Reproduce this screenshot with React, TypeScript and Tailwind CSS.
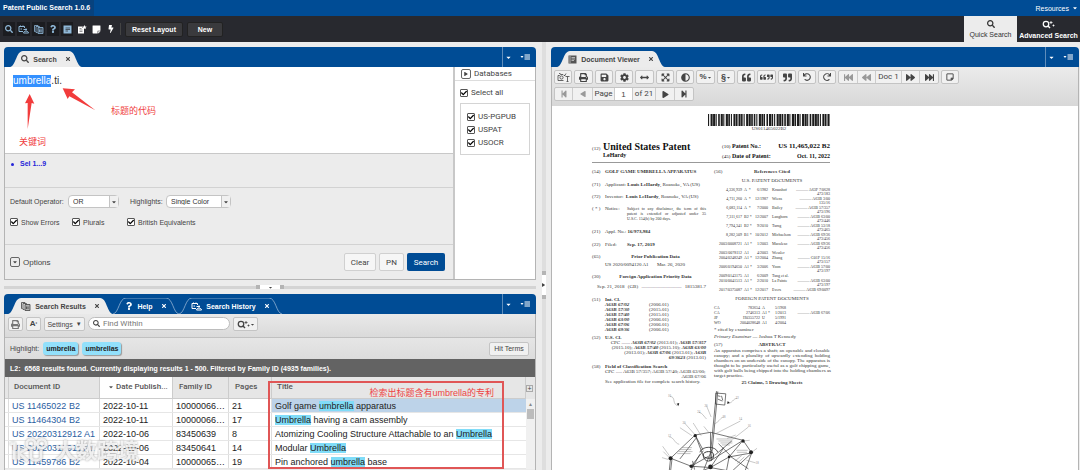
import { useState } from "react";
import type { ReactNode } from "react";
import {
  FaSearch, FaQuestion, FaBolt, FaStickyNote, FaRegStickyNote, FaCheck, FaPrint, FaSave, FaCog, FaArrowsAltH,
  FaAdjust, FaQuoteLeft, FaQuoteRight, FaUndo, FaRedo, FaFastBackward, FaBackward, FaForward, FaFastForward,
  FaStepBackward, FaStepForward, FaPlay, FaCaretDown, FaTimes, FaExpandArrowsAlt,
} from "react-icons/fa";

const HistoryIcon = () => (
  <svg viewBox="0 0 22 18" className="w-[11px] h-[9px]" fill="none" stroke="currentColor" strokeWidth="2">
    <path d="M10 13H2V3h11v3M5 1v3M10 1v3M5 8h3M11 9h3" />
    <circle cx="16" cy="9" r="2.2" fill="currentColor" stroke="none" />
    <path d="M11 16c0-5 10-5 10 0z" />
  </svg>
);

const StackIcon = () => (
  <svg viewBox="0 0 20 18" className="w-[10px] h-[9px]" fill="none" stroke="currentColor" strokeWidth="1.6">
    <path d="M3 13H1V1h7v2M7 15H4V3h7v2" />
    <path d="M8 5h10v12H8z" fill="currentColor" fillOpacity=".35" />
    <path d="M11 9v5M14 9v5" />
  </svg>
);

const DocIcon = () => (
  <svg viewBox="0 0 18 18" className="w-[9px] h-[9px]">
    <path d="M1 1h16v16H1z" fill="currentColor" />
    <path d="M5 6h9M5 9h9M5 12h5" stroke="#28292f" strokeWidth="1.4" />
  </svg>
);

const ViewerIcon = () => (
  <svg viewBox="0 0 18 18" className="w-[9px] h-[9px]">
    <path d="M1 1h16v16H1z" fill="#555" />
    <path d="M4 2v14M7 5h7M7 8h7M7 11h5" stroke="#ddd" strokeWidth="1.4" />
  </svg>
);

const EditNoteIcon = () => (
  <svg viewBox="0 0 20 18" className="w-[10px] h-[9px]" fill="currentColor">
    <path d="M2 3h9v3h3v11H2z" />
    <path d="M15 0l1.500 3 3 .5-2.500 2 .5 3-2.500-1.500-3 1.500.5-3-2-2 3-.5z" />
    <path d="M5 7h4M5 10h6M5 13h6" stroke="#28292f" strokeWidth="1" />
  </svg>
);

const SearchPlus = () => (
  <svg viewBox="0 0 26 18" className="w-[13px] h-[9px]" fill="none" stroke="currentColor">
    <circle cx="8" cy="8" r="5.500" strokeWidth="2.500" />
    <path d="M12 12l4 4" strokeWidth="3" />
    <path d="M18 2v6M15 5h6M23 9v4M21 11h4" strokeWidth="1.600" />
  </svg>
);

const CameraText = () => (
  <svg viewBox="0 0 26 18" className="w-[13px] h-[9px]" fill="none" stroke="currentColor" strokeWidth="1.600">
    <path d="M13 15H2V5h3l2-2h5l2 2h2M4 1h3" />
    <circle cx="9" cy="9" r="3.200" />
    <path d="M17 7h8M21 7v10M19 17h4M18 1l-3 5" />
  </svg>
);

const MenuIcon = () => (
  <svg viewBox="0 0 20 12" className="w-[10px] h-[6px]" fill="none" stroke="currentColor" strokeWidth="2">
    <path d="M9 2h11M9 6h11M9 10h11" />
    <path d="M1 4h6L4 8z" fill="currentColor" stroke="none" />
  </svg>
);

const Tab = ({ w, width, active, icon, label }: { w: number; width: string; active?: boolean; icon: ReactNode; label: string }) => (
  <div className={`relative h-4 ${width} ${active ? "text-[#444]" : "text-white"}`}>
    <svg className="absolute inset-0 w-full h-full" viewBox={`0 0 ${w} 16`} preserveAspectRatio="none">
      <path
        d={`M0 16C6 15 6 0 13 0H${w - 13}C${w - 6} 0 ${w - 6} 15 ${w} 16`}
        fill={active ? "#ececec" : "none"}
        stroke={active ? "none" : "#a9c2dc"}
        strokeWidth=".7"
      />
    </svg>
    <button className="relative w-full h-full flex items-center justify-center gap-1 font-bold leading-none">
      {icon}
      <span className="whitespace-nowrap">{label}</span>
      <FaTimes className="w-[6px] h-[6px] ml-1" />
    </button>
  </div>
);

const TabBar = ({ children }: { children: ReactNode }) => (
  <div className="h-5 shrink-0 bg-[#004c95] rounded-t flex items-end">
    {children}
    <div className="ml-auto self-stretch w-[34px] border-l border-[#5f8dbb] flex items-center justify-between pl-0.5 pr-1.5 text-white">
      <FaCaretDown className="w-[7px] h-[7px]" />
      <MenuIcon />
    </div>
  </div>
);

const Check = ({ label, className = "" }: { label: string; className?: string }) => {
  const [on, setOn] = useState(true);
  return (
    <label className={`flex items-center gap-[3px] leading-none whitespace-nowrap ${className}`}>
      <span className="relative w-2 h-2 shrink-0">
        <input
          type="checkbox"
          checked={on}
          onChange={() => setOn(!on)}
          className="block appearance-none w-2 h-2 border border-[#555] rounded-[1px] bg-white"
        />
        {on && <FaCheck className="absolute left-[1px] top-[1px] w-[6px] h-[6px] text-black pointer-events-none" />}
      </span>
      {label}
    </label>
  );
};

const Pick = ({ id, value, width }: { id: string; value: string; width: string }) => (
  <div className={`relative h-[13px] ${width}`}>
    <select id={id} className="appearance-none w-full h-full bg-white border border-[#c4c4c4] rounded-sm pl-1 text-[#333] leading-none">
      <option>{value}</option>
    </select>
    <span className="absolute right-px top-px bottom-px w-[9px] border-l border-[#c4c4c4] bg-[#f0f0f0] flex items-center justify-center pointer-events-none">
      <FaCaretDown className="w-[6px] h-[6px]" />
    </span>
  </div>
);

const SearchPanel = () => (
  <section className="flex flex-col shrink-0">
    <TabBar>
      <div className="pl-1.5">
        <Tab w={72} width="w-[72px]" active icon={<FaSearch className="w-2 h-2" />} label="Search" />
      </div>
    </TabBar>
    <div className="flex border border-t-0 border-[#b4b4b4]">
      <div className="flex-1 min-w-0">
        <div className="relative h-[87px] bg-white border-b border-[#c8c8c8] px-2 pt-2">
          <div className="text-[10px] leading-3 text-[#333]" role="textbox" aria-label="Query">
            <span className="inline-block bg-[#3390ff] text-white">umbrella</span>.ti.
          </div>
          <svg className="absolute left-0 top-0 w-[100px] h-[70px]" viewBox="0 0 300 210" fill="#f23c3c">
            <path d="M74 81L88 110 80 108 68 186 68 108 60 109z" />
            <path d="M173 64L210 67 201 76 271 130 193 88 188 96z" />
          </svg>
          <span className="absolute left-[106px] top-[38px] text-[9px] leading-3 text-[#f04040]">标题的代码</span>
          <span className="absolute left-[14px] top-[69px] text-[9px] leading-3 text-[#f04040]">关键词</span>
        </div>
        <div className="h-[34px] border-b border-[#d2d2d2] px-1.5 pt-1.5">
          <button className="flex items-center gap-[6px] font-bold leading-2 text-[#2424d8]">
            <span className="w-[3px] h-[3px] rounded-full bg-[#2424d8]" />
            Sel 1...9
          </button>
        </div>
        <div className="h-[57px] border-b border-[#d2d2d2] px-[5px] pt-[7px]">
          <div className="flex items-center">
            <label htmlFor="op" className="w-[58px]">Default Operator:</label>
            <Pick id="op" value="OR" width="w-[51px]" />
            <label htmlFor="hl" className="w-[36px] ml-[11px]">Highlights:</label>
            <Pick id="hl" value="Single Color" width="w-[65px]" />
          </div>
          <div className="flex pt-[10px]">
            <Check label="Show Errors" className="w-[62px]" />
            <Check label="Plurals" className="w-[55px]" />
            <Check label="British Equivalents" />
          </div>
        </div>
        <div className="h-[34px] flex items-center pl-[5px] pr-2 gap-[3px]">
          <button className="flex items-center gap-[3px] mr-auto text-[8px]">
            <span className="w-[10px] h-[10px] border border-[#666] rounded-[2px] flex items-center justify-center">
              <FaCaretDown className="w-[6px] h-[6px]" />
            </span>
            Options
          </button>
          <button className="h-[18px] w-8 bg-[#f6f6f6] border border-[#d0d0d0] rounded-[2px] text-[8px] font-['Roboto',sans-serif]">Clear</button>
          <button className="h-[18px] w-[25px] bg-[#f6f6f6] border border-[#d0d0d0] rounded-[2px] text-[8px] font-['Roboto',sans-serif]">PN</button>
          <button className="h-[18px] w-[38px] bg-[#004c95] text-white rounded-[2px] text-[8px] font-['Roboto',sans-serif]">Search</button>
        </div>
      </div>
      <div className="w-[82px] shrink-0 bg-white border-l-2 border-[#c8c8c8] text-[8px] font-['Roboto',sans-serif]">
        <div className="h-[14px] border-b border-[#ddd] flex items-center gap-[3px] pl-1.5">
          <span className="w-[10px] h-[10px] border border-[#666] rounded-[2px] flex items-center justify-center">
            <FaPlay className="w-[4px] h-[4px]" />
          </span>
          Databases
        </div>
        <div className="px-[5px] pt-2">
          <Check label="Select all" />
          <div className="mt-[6px] h-[52px] border border-[#d4d4d4] px-[6px] pt-[9px] flex flex-col gap-[5px]">
            <Check label="US-PGPUB" />
            <Check label="USPAT" />
            <Check label="USOCR" />
          </div>
        </div>
      </div>
    </div>
  </section>
);

const results = [
  ["US 11465022 B2", "2022-10-11", "10000066…", "21", "Golf game |umbrella| apparatus"],
  ["US 11464304 B2", "2022-10-11", "10000066…", "17", "|Umbrella| having a cam assembly"],
  ["US 20220312912 A1", "2022-10-06", "83450639", "8", "Atomizing Cooling Structure Attachable to an |Umbrella|"],
  ["US 20220312911 A1", "2022-10-06", "83450641", "14", "Modular |Umbrella|"],
  ["US 11459786 B2", "2022-10-04", "10000065…", "19", "Pin anchored |umbrella| base"],
];

const greyBtn = "h-[14px] bg-[#f1f1f1] border border-[#c4c4c4] rounded-[2px] flex items-center justify-center leading-none";
const chip = "h-[13px] px-[3px] rounded-[3px] bg-[#92e0fb] shadow-[1px_1px_1px_#999] font-bold flex items-center text-[#222]";
const th = "shrink-0 border-r border-[#ccc] leading-[20px] font-medium font-['Roboto',sans-serif]";

const ResultsPanel = () => (
  <section className="relative flex flex-col flex-1 min-h-0">
    <TabBar>
      <div className="pl-1 flex">
        <Tab w={105} width="w-[105px]" active icon={<StackIcon />} label="Search Results" />
        <Tab w={66} width="w-[66px]" icon={<FaQuestion className="w-2 h-2" />} label="Help" />
        <Tab w={103} width="w-[103px]" icon={<HistoryIcon />} label="Search History" />
      </div>
    </TabBar>
    <div className="flex-1 min-h-0 border-x border-[#b4b4b4]">
      <div className="h-6 bg-gradient-to-b from-[#e9e9e9] to-[#dadada] border-b border-[#c0c0c0] flex items-start pt-[3px] px-[3px] gap-[3px]">
        <button aria-label="Print" className={`${greyBtn} w-[15px] text-[#777]`}><FaPrint className="w-[9px] h-[9px]" /></button>
        <button aria-label="Font size" className={`${greyBtn} w-[15px] font-bold text-[8px]`}>A<span className="text-[5px]">²</span></button>
        <button className={`${greyBtn} w-[41px] gap-[3px]`}>Settings <span className="text-[6px]">▼</span></button>
        <label className="relative block w-[142px]">
          <FaSearch className="absolute left-[5px] top-[3px] w-[7px] h-[7px]" />
          <input
            placeholder="Find Within"
            aria-label="Find Within"
            className="block w-full h-[13px] rounded-full border border-[#bdbdbd] bg-white pl-[14px] leading-none text-[8px] font-['Roboto',sans-serif] placeholder:text-[#777]"
          />
        </label>
        <button aria-label="Search options" className={`${greyBtn} w-[25px]`}><SearchPlus /><FaCaretDown className="w-[5px] h-[5px]" /></button>
      </div>
      <div className="h-[21px] bg-gradient-to-b from-[#e6e6e6] to-[#dcdcdc] flex items-center pl-[5px] pr-1.5 gap-1">
        <span>Highlight:</span>
        <span className={chip}>umbrella</span>
        <span className={chip}>umbrellas</span>
        <button className={`${greyBtn} w-10 ml-auto`}>Hit Terms</button>
      </div>
      <div className="h-[18px] bg-[#636363] text-white font-bold flex items-center pl-[5px] whitespace-pre">
        {"L2:  6568 results found. Currently displaying results 1 - 500. Filtered by Family ID (4935 families)."}
      </div>
      <div className="flex">
        <table className="flex-1 block overflow-hidden">
          <thead className="block">
            <tr className="flex h-[22px] items-stretch bg-[#e6e6e6] border-b border-[#ccc] text-left text-[8px] text-[#555]">
              <th aria-label="Mark" className="w-1 shrink-0 border-r border-[#ccc]" />
              <th className={`${th} w-[91px] pl-[5px]`}>Document ID</th>
              <th className={`${th} w-[73px] bg-white pl-2 whitespace-nowrap`}>
                <FaCaretDown className="inline w-[6px] h-[6px] mr-0.5" />Date Publish...
              </th>
              <th className={`${th} w-14 pl-1.5`}>Family ID</th>
              <th className={`${th} w-[43px] pl-1.5`}>Pages</th>
              <th className={`${th} flex-1 pl-[5px]`}>Title</th>
            </tr>
          </thead>
          <tbody className="block bg-white text-[9px] text-[#222]">
            {results.map((r, i) => (
              <tr key={r[0]} className="flex h-[14px] leading-[14px] border-b border-[#e6e6e6] whitespace-nowrap">
                <td className="w-1 shrink-0 border-r border-[#ddd]" />
                <td className="w-[91px] shrink-0 border-r border-[#ddd] pl-[3px]"><a href="#" className="text-[#2a5d9f]">{r[0]}</a></td>
                <td className="w-[73px] shrink-0 border-r border-[#ddd] pl-[3px]">{r[1]}</td>
                <td className="w-14 shrink-0 border-r border-[#ddd] pl-[3px]">{r[2]}</td>
                <td className="w-[43px] shrink-0 border-r border-[#ddd] pl-[3px]">{r[3]}</td>
                <td className={`flex-1 pl-[3px] ${i === 0 ? "bg-[#bdd3e9]" : ""}`}>
                  {r[4].split("|").map((part, k) => (k % 2 ? <mark key={k} className="bg-[#80dcf8] text-inherit">{part}</mark> : part))}
                </td>
              </tr>
            ))}
          </tbody>
        </table>
        <div className="w-[9px] shrink-0 bg-[#f0f0f0]">
          <div className="h-[22px] bg-[#e6e6e6] flex items-center">
            <span className="w-[7px] h-[7px] border border-[#aaa] text-[7px] leading-[5px] text-center">+</span>
          </div>
          <div className="h-[10px] text-[5px] leading-[10px] text-center text-[#888]">▲</div>
          <div className="w-[7px] h-[10px] mx-auto bg-[#bcbcbc]" />
        </div>
      </div>
    </div>
    <div className="absolute left-[264px] right-[32px] top-[87px] bottom-px border-2 border-[#e05656] pointer-events-none">
      <span className="absolute right-2 top-1 text-[9px] leading-3 text-[#ee4444]">检索出标题含有umbrella的专利</span>
    </div>
  </section>
);

const Group = ({ children }: { children: ReactNode }) => (
  <div className="flex h-[14px] bg-[#f1f1f1] border border-[#c4c4c4] rounded-[2px] divide-x divide-[#ccc]">{children}</div>
);
const cell = "flex items-center justify-center leading-none";
const ic = "w-[9px] h-[9px]";

const tools: { name: string; icon: ReactNode; wide?: boolean; down?: boolean }[] = [
  { name: "Image or text", icon: <CameraText /> },
  { name: "Print", icon: <FaPrint className={ic} />, wide: true },
  { name: "Save", icon: <FaSave className={ic} /> },
  { name: "Settings", icon: <FaCog className={ic} /> },
  { name: "Fit width", icon: <FaArrowsAltH className={ic} />, wide: true },
  { name: "Fit page", icon: <FaExpandArrowsAlt className={ic} />, down: true },
  { name: "Contrast", icon: <FaAdjust className={ic} /> },
  { name: "Zoom", icon: <><b className="text-[8px]">%</b><FaCaretDown className="w-[5px] h-[5px]" /></>, wide: true },
  { name: "Section", icon: <><b className="text-[9px]">§</b><FaCaretDown className="w-[5px] h-[5px]" /></> },
  { name: "Previous hit", icon: <FaQuoteLeft className={ic} /> },
  { name: "Hits", icon: <><FaQuoteLeft className="w-[6px] h-[6px] mr-px" /><FaQuoteRight className="w-[6px] h-[6px]" /></>, wide: true },
  { name: "Next hit", icon: <FaQuoteRight className={ic} /> },
  { name: "Rotate left", icon: <FaUndo className="w-2 h-2" /> },
  { name: "Rotate right", icon: <FaRedo className="w-2 h-2" /> },
];

const Entry = ({ n, className = "", children }: { n: string; className?: string; children: ReactNode }) => (
  <div className={`flex ${className}`}>
    <span className="w-[13px] shrink-0">{n}</span>
    <div className="flex-1 min-w-0">{children}</div>
  </div>
);

const refs = [
  ["4,336,939", "A  *", "6/1982", "Kraushof", "A63F 7/0628", "473/183"],
  ["4,711,260", "A  *", "12/1987", "Wiens", "A63B 3/00", "135/16"],
  ["6,083,114", "A  *", "7/2000", "Bailey", "A63B 57/357", "473/196"],
  ["7,311,617", "B2 *", "12/2007", "Langhorn", "A63B 63/00", "473/446"],
  ["7,794,341", "B2 *", "9/2010", "Tarng", "A63B 53/18", "473/465"],
  ["8,282,509", "B1 *", "10/2012", "Michaelson", "A63B 69/36", "473/456"],
  ["2003/0008721", "A1 *", "1/2003", "Macaleso", "A63B 69/36", "473/456"],
  ["2003/0078112", "A1", "4/2003", "Wessler", "", ""],
  ["2004/0248249", "A1 *", "12/2004", "Zhang", "G01F 15/16", "473/157"],
  ["2006/0194650", "A1 *", "3/2006", "Yoon", "A63B 57/00", "473/197"],
  ["2009/0143175", "A1", "6/2009", "Tang et al.", "", ""],
  ["2010/0041513", "A1 *", "2/2010", "La Painte", "A63B 63/00", "473/197"],
  ["2017/0375087", "A1 *", "12/2017", "Evers", "A63B 69/0097", ""],
];

const classes = [["A63B 67/02", "2006.01"], ["A63B 57/30", "2015.01"], ["A63B 57/40", "2015.01"], ["A63B 63/00", "2006.01"], ["A63B 67/06", "2006.01"], ["A63B 69/36", "2006.01"]];

const foreign = [["CA", "783654", "A", "5/1968", ""], ["CA", "2746313", "A1 *", "1/2013", "A63B 67/06"], ["JP", "H0355722", "U", "5/1991", ""], ["WO", "2004028648", "A1", "4/2004", ""]];

const bars = [1, 3, 3, 1, 2, 3, 1, 3, 2, 1, 3, 2, 3, 2, 1, 3, 3, 2, 2, 1, 3, 3, 1, 2, 3, 2, 1, 3, 3, 2, 2, 3, 1, 3, 2, 3, 1, 3, 3, 1, 2, 3, 3, 2, 1, 3, 2, 3];

const Barcode = () => (
  <svg viewBox="0 0 144 12" preserveAspectRatio="none" className="w-[122px] h-3 ml-auto">
    {bars.map((b, i) => <rect key={i} x={i * 3} y="0" width={0.7 + b * 0.6} height="12" fill="#1c1c1c" />)}
  </svg>
);

const Umbrella = () => (
  <svg viewBox="0 0 340 246" className="w-[113px] h-[82px] ml-[58px]" fill="none" stroke="#333" strokeWidth="2">
    <path d="M200 6L180 216M204 7L184 216M198 12l30 2-3 34-28-3zM204 20l8 2M204 30l14 6M215 20l4 14" />
    <path d="M62 208L136 138 182 130 280 154 306 192 286 246M62 208L58 246M62 208L124 232 182 236 238 204 306 192M136 138L160 184M182 130V184M280 154L238 204M136 138l24 62M280 154l-96 60M124 232L176 202M124 232l36-46M182 236l54 10" />
    <path d="M66 212l-4 34M128 216l6 26M238 204l-8 42M244 204l52 36M182 236l-26 10M182 236l40-60M206 164l40 40M140 146l-50 64M186 182l-24 60M302 196l-52 48M150 196l-28 50M196 198l50-42" />
    <ellipse cx="176" cy="198" rx="16" ry="10" strokeWidth="3" />
    <path d="M160 200c2 22 30 22 32 0M150 190c6-20 48-20 54 0" strokeWidth="2.500" />
    <path d="M96 176h30M90 182h34M86 188h42M82 194h40M200 150h50M206 156h42M212 162h36M216 168h24M260 184h34M262 190h30M256 216l20-16M262 224l22-20" strokeWidth="1.200" stroke="#666" />
    <path d="M60 22c20 0 4 26 26 28M262 28c-14 0-12 16-30 14M170 50l14 34M148 70c10 2 14 12 22 20M222 84c-10 0-10 12-30 22M104 102l32 36M90 116l36 24M130 102l24 38M162 112l16 20M272 96l-74 38M296 114l-46 36M58 144c14 0 16 20 30 22M38 172l20 28M40 188l20 20M36 206l20 6M300 154l-20 2M322 178l-18 14M318 222l-28-8M258 138l-26 10" strokeWidth="1.200" stroke="#777" />
    <g fill="#222" stroke="none">
      <circle cx="136" cy="140" r="5" /><circle cx="280" cy="156" r="5" /><circle cx="304" cy="190" r="6" /><circle cx="62" cy="208" r="6" />
      <circle cx="182" cy="234" r="7" /><circle cx="124" cy="232" r="5" /><circle cx="238" cy="204" r="4" /><path d="M86 50l-6-6 8-2zM232 44l2-8 6 6z" />
    </g>
    <g fill="#888" stroke="none" fontSize="9">
      <text x="54" y="24">10</text><text x="258" y="30">22</text><text x="164" y="54">20</text><text x="142" y="72">24</text><text x="218" y="88">28</text>
      <text x="98" y="104">30</text><text x="268" y="94">14</text><text x="294" y="114">16</text><text x="54" y="144">12</text><text x="318" y="224">18</text>
    </g>
  </svg>
);

const PatentPage = () => (
  <article className="ml-10 w-[238px] pt-2 font-['Liberation_Serif',serif] text-[5px] leading-[5px] text-[#333]">
    <Barcode />
    <div className="w-[122px] ml-auto text-center">US011465022B2</div>
    <header className="flex justify-between mt-[10px] pb-px border-b border-[#999]">
      <div className="flex items-baseline">
        <span className="w-[11px]">(12)</span>
        <div className="font-bold text-[#111]">
          <h1 className="text-[10px] leading-[11px] whitespace-nowrap">United States Patent</h1>
          <p className="text-[6px] leading-[7px]">LeHardy</p>
        </div>
      </div>
      <div className="w-[108px] text-[6px] font-bold text-[#111]">
        <div className="flex items-baseline leading-[10px]"><span className="w-[10px] font-normal text-[5px]">(10)</span>Patent No.:<span className="ml-auto text-[7px]">US 11,465,022 B2</span></div>
        <div className="flex items-baseline leading-[8px]"><span className="w-[10px] font-normal text-[5px]">(45)</span>Date of Patent:<span className="ml-auto">Oct. 11, 2022</span></div>
      </div>
    </header>
    <div className="flex justify-between mt-[6px]">
      <div className="w-[114px] whitespace-nowrap">
        <Entry n="(54)"><b>GOLF GAME UMBRELLA APPARATUS</b></Entry>
        <Entry n="(71)" className="mt-2">Applicant: <b>Louis LeHardy</b>, Roanoke, VA (US)</Entry>
        <Entry n="(72)" className="mt-[7px]">Inventor: &nbsp;<b>Louis LeHardy</b>, Roanoke, VA (US)</Entry>
        <Entry n="( * )" className="mt-[7px]">
          <div className="flex">
            <span className="w-[22px]">Notice:</span>
            <div className="w-[79px] text-[4px]">
              <p className="[text-align-last:justify]">Subject to any disclaimer, the term of this</p>
              <p className="[text-align-last:justify]">patent is extended or adjusted under 35</p>
              <p>U.S.C. 154(b) by 200 days.</p>
            </div>
          </div>
        </Entry>
        <Entry n="(21)" className="mt-2">Appl. No.: <b>16/973,984</b></Entry>
        <Entry n="(22)" className="mt-2"><span className="inline-block w-[22px]">Filed:</span><b>Sep. 17, 2019</b></Entry>
        <Entry n="(65)" className="mt-[7px]"><b className="block text-center">Prior Publication Data</b></Entry>
        <p className="mt-[3px] pl-[13px]">US 2020/0094120 A1 <span className="ml-[7px]">Mar. 26, 2020</span></p>
        <Entry n="(30)" className="mt-[7px]"><b className="block text-center">Foreign Application Priority Data</b></Entry>
        <p className="mt-[5px] pl-[5px] flex justify-between"><span>Sep. 21, 2018</span><span>(GB)</span><span>................................</span><span>1815381.7</span></p>
        <Entry n="(51)" className="mt-2">
          <b>Int. Cl.</b>
          {classes.map(([c, y]) => <p key={c} className="flex"><b className="w-11 italic">{c}</b>({y})</p>)}
        </Entry>
        <Entry n="(52)" className="mt-[3px]">
          <b>U.S. Cl.</b>
          <div className="text-right">
            <p>CPC ....... <b><i>A63B 67/02</i></b> (2013.01); <b><i>A63B 57/357</i></b></p>
            <p>(2015.10); <b><i>A63B 57/40</i></b> (2015.10); <b><i>A63B 63/00</i></b></p>
            <p>(2013.01); <b><i>A63B 67/06</i></b> (2013.01); <b><i>A63B</i></b></p>
            <p><b><i>69/3623</i></b> (2013.01)</p>
          </div>
        </Entry>
        <Entry n="(58)" className="mt-1">
          <b>Field of Classification Search</b>
          <p>CPC ..... A63B 57/357; A63B 57/40; A63B 63/00;</p>
          <p className="text-right">A63B 67/06</p>
          <p>See application file for complete search history.</p>
        </Entry>
      </div>
      <div className="w-[116px] whitespace-nowrap">
        <Entry n="(56)"><b className="block text-center pr-[13px]">References Cited</b></Entry>
        <p className="text-center mt-1">U.S. PATENT DOCUMENTS</p>
        <div className="mt-1 text-[4px]">
          {refs.map((r) => (
            <div key={r[0]}>
              <p className="flex">
                <span className="w-[28px] text-right">{r[0]}</span>
                <span className="w-[10px] pl-0.5 whitespace-pre">{r[1]}</span>
                <span className="w-4 text-right">{r[2]}</span>
                <span className="pl-1">{r[3]}</span>
                {r[4] && <span className="ml-auto">............ {r[4]}</span>}
              </p>
              {r[5] && <p className="text-right leading-[4px]">{r[5]}</p>}
            </div>
          ))}
        </div>
        <p className="text-center mt-1">FOREIGN PATENT DOCUMENTS</p>
        <div className="mt-1 text-[4px]">
          {foreign.map((r) => (
            <p key={r[1]} className="flex">
              <span className="w-5">{r[0]}</span>
              <span className="w-[26px] text-right">{r[1]}</span>
              <span className="w-[10px] pl-0.5">{r[2]}</span>
              <span className="w-4 text-right">{r[3]}</span>
              {r[4] && <span className="ml-auto">............ {r[4]}</span>}
            </p>
          ))}
        </div>
        <p className="mt-0.5">* cited by examiner</p>
        <p className="mt-0.5"><i>Primary Examiner</i> — Joshua T Kennedy</p>
        <Entry n="(57)" className="mt-[3px]"><b className="block text-center pr-[13px]">ABSTRACT</b></Entry>
        <div className="mt-px [text-align-last:justify]">
          <p>An apparatus comprises a shaft; an openable and closable</p>
          <p>canopy; and a plurality of upwardly extending holding</p>
          <p>chambers on an underside of the canopy. The apparatus is</p>
          <p>thought to be particularly useful as a golf chipping game,</p>
          <p>with golf balls being chipped into the holding chambers as</p>
          <p className="[text-align-last:left]">target practice.</p>
        </div>
        <b className="block text-center mt-0.5">25 Claims, 5 Drawing Sheets</b>
      </div>
    </div>
    <div className="mt-1"><Umbrella /></div>
  </article>
);

const ViewerPanel = () => (
  <section className="flex flex-col min-h-0 min-w-0">
    <TabBar>
      <div className="pl-1.5">
        <Tab w={108} width="w-[108px]" active icon={<ViewerIcon />} label="Document Viewer" />
      </div>
    </TabBar>
    <div className="h-[39px] shrink-0 bg-gradient-to-b from-[#ebebeb] to-[#d8d8d8] border-x border-[#b4b4b4] px-0.5 pt-[3px] flex flex-col gap-[3px]">
      <div className="flex gap-0.5">
        {tools.map((t) => (
          <button key={t.name} aria-label={t.name} className={`${greyBtn} ${t.wide ? "w-[19px]" : "w-[18px]"} ${t.down ? "bg-[#d5d5d5] border-[#aaa]" : ""}`}>
            {t.icon}
          </button>
        ))}
        <Group>
          <button aria-label="First document" className={`${cell} w-[19px] text-[#999]`}><FaFastBackward className={ic} /></button>
          <button aria-label="Previous document" className={`${cell} w-[18px] text-[#999]`}><FaBackward className={ic} /></button>
          <span className={`${cell} w-[26px] text-[8px] font-['Roboto',sans-serif]`}>Doc 1</span>
          <button aria-label="Next document" className={`${cell} w-[18px]`}><FaForward className={ic} /></button>
          <button aria-label="Last document" className={`${cell} w-[18px]`}><FaFastForward className={ic} /></button>
        </Group>
        <button aria-label="Notes" className={`${greyBtn} w-[18px]`}><FaRegStickyNote className="w-2 h-2 rotate-0 text-[#222]" /></button>
      </div>
      <div className="flex">
        <Group>
          <button aria-label="First page" className={`${cell} w-[18px] text-[#999]`}><FaStepBackward className="w-2 h-2" /></button>
          <button aria-label="Previous page" className={`${cell} w-5 text-[#999]`}><FaPlay className="w-[6px] h-[6px] rotate-180" /></button>
          <label htmlFor="page" className={`${cell} w-[22px] text-[8px] font-['Roboto',sans-serif]`}>Page</label>
          <input id="page" defaultValue="1" className="w-[18px] bg-white text-center text-[8px] leading-none" />
          <span className={`${cell} w-[23px] text-[8px] font-['Roboto',sans-serif]`}>of 21</span>
          <button aria-label="Next page" className={`${cell} w-[19px]`}><FaPlay className="w-[7px] h-[7px]" /></button>
          <button aria-label="Last page" className={`${cell} w-[18px]`}><FaStepForward className="w-2 h-2" /></button>
        </Group>
      </div>
    </div>
    <div className="flex-1 min-h-0 overflow-hidden bg-white border-x border-[#b4b4b4]">
      <PatentPage />
    </div>
  </section>
);

const Watermark = () => (
  <div className="absolute left-[9px] bottom-[5px] flex items-center gap-[6px] text-white/80 [filter:drop-shadow(0_0_1px_#888)] pointer-events-none">
    <svg viewBox="0 0 120 84" className="w-10 h-7" fill="none" stroke="currentColor" strokeWidth="8">
      <path d="M4 20h12v48M30 70V26M30 48l24-14M30 48l26 24" />
      <circle cx="66" cy="20" r="13" /><circle cx="98" cy="20" r="13" />
      <path d="M66 38v22c0 14 30 14 30 0V38" />
    </svg>
    <span className="text-[21px] leading-7 font-bold">大数跨境</span>
  </div>
);

const dockBtn = "h-[14px] bg-[#1b1c20] flex items-center justify-center";
const navBtn = "h-[14px] text-white flex items-center justify-center";
const textBtn = "h-[15px] bg-[#3a3a3d] border border-[#222] rounded-[2px] font-bold leading-none";

export default function App() {
  return (
    <div className="relative h-screen flex flex-col overflow-hidden bg-[#ececec] text-[#444] text-[7px] leading-[9px] font-['Liberation_Sans','Noto_Sans_CJK_SC',sans-serif]">
      <header className="h-4 shrink-0 bg-[#004c95] text-white flex items-center justify-between">
        <h1 className="font-bold pl-[3px] pr-1 leading-4 bg-[#07427e]">Patent Public Search 1.0.6</h1>
        <button className="flex items-center gap-[3px] pr-0.5">Resources <FaCaretDown className="w-[6px] h-[6px]" /></button>
      </header>
      <nav className="h-[26px] shrink-0 bg-[#28292f] text-white flex items-center pl-[3px]">
        <div className="flex gap-0.5 text-[#8fb8d8]">
          <button aria-label="Search" className={`${dockBtn} w-3`}><FaSearch className="w-2 h-2" /></button>
          <button aria-label="Search history" className={`${dockBtn} w-[13px]`}><HistoryIcon /></button>
          <button aria-label="Search results" className={`${dockBtn} w-[13px]`}><StackIcon /></button>
          <button aria-label="Help" className={`${dockBtn} w-3`}><FaQuestion className="w-2 h-2" /></button>
          <button aria-label="Document viewer" className={`${dockBtn} w-3`}><DocIcon /></button>
          <button aria-label="Tagged documents" className={`${navBtn} w-[13px]`}><EditNoteIcon /></button>
          <button aria-label="Notes" className={`${navBtn} w-3`}><FaStickyNote className="w-[9px] h-[9px]" /></button>
          <button aria-label="Hit terms" className={`${navBtn} w-[14px]`}><FaBolt className="w-2 h-2" /></button>
        </div>
        <div className="w-px h-3 bg-[#444] ml-0.5 mr-1" />
        <button className={`${textBtn} w-[58px]`}>Reset Layout</button>
        <button className={`${textBtn} w-9 ml-1`}>New</button>
        <button className="h-full w-[53px] ml-auto bg-[#ececec] text-[#333] flex flex-col items-center justify-center gap-[3px] leading-[7px]">
          <FaSearch className="w-2 h-2" />Quick Search
        </button>
        <button className="h-full w-[63px] flex flex-col items-center justify-center gap-[3px] leading-[7px] font-bold whitespace-nowrap">
          <SearchPlus />Advanced Search
        </button>
      </nav>
      <main className="flex-1 min-h-0 grid grid-cols-[532fr_15px_528fr] pt-[5px] pl-1 pr-px">
        <div className="flex flex-col min-h-0 min-w-0">
          <SearchPanel />
          <div className="h-[14px] shrink-0 flex items-center justify-center">
            <div className="flex-1 h-[3px] bg-[#d4d4d4]" />
            <button aria-label="Resize rows" className="w-7 h-1 bg-white border-x-4 border-[#b4b4b4] flex items-center justify-center"><FaCaretDown className="w-[5px] h-[5px]" /></button>
            <div className="flex-1 h-[3px] bg-[#d4d4d4]" />
          </div>
          <ResultsPanel />
        </div>
        <div className="-mt-[5px] flex flex-col items-center">
          <div className="h-[229px] w-1 bg-[#dedede]" />
          <button aria-label="Resize columns" className="w-1 h-7 bg-white border-y-4 border-[#b4b4b4] flex items-center justify-center"><FaPlay className="w-[3px] h-1" /></button>
          <div className="flex-1 w-1 bg-[#dedede]" />
        </div>
        <ViewerPanel />
      </main>
      <Watermark />
    </div>
  );
}
